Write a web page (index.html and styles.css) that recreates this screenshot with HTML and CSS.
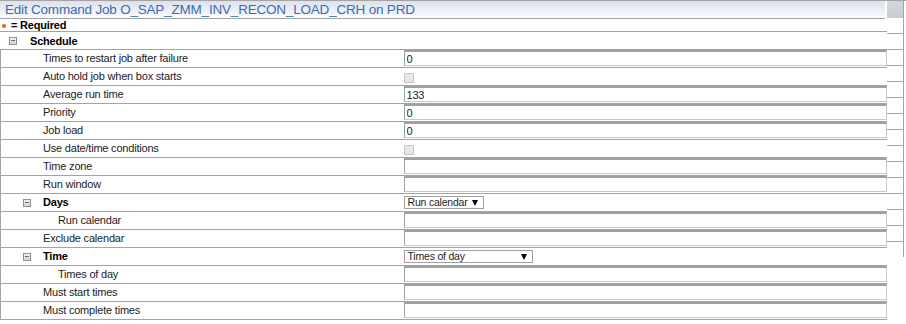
FILE: index.html
```html
<!DOCTYPE html>
<html lang="en">
  <head>
    <meta charset="UTF-8" />
    <title>Edit Command Job</title>
    <link rel="stylesheet" href="styles.css">
  </head>
  <body>
    <div class="page">
      <div class="main">
        <div class="title">Edit Command Job O_SAP_ZMM_INV_RECON_LOAD_CRH on PRD</div>
        <div class="required"><span class="dot"></span>= Required</div>
        <div class="section"><span class="toggle"></span>Schedule</div>

        <table class="form">
          <colgroup>
            <col class="col-label" />
            <col class="col-field" />
          </colgroup>
          <tr>
            <td class="label">Times to restart job after failure</td>
            <td class="field"><input class="text" type="text" value="0" /></td>
          </tr>
          <tr>
            <td class="label">Auto hold job when box starts</td>
            <td class="field"><span class="check"></span></td>
          </tr>
          <tr>
            <td class="label">Average run time</td>
            <td class="field"><input class="text" type="text" value="133" /></td>
          </tr>
          <tr>
            <td class="label">Priority</td>
            <td class="field"><input class="text" type="text" value="0" /></td>
          </tr>
          <tr>
            <td class="label">Job load</td>
            <td class="field"><input class="text" type="text" value="0" /></td>
          </tr>
          <tr>
            <td class="label">Use date/time conditions</td>
            <td class="field"><span class="check"></span></td>
          </tr>
          <tr>
            <td class="label">Time zone</td>
            <td class="field"><input class="text" type="text" value="" /></td>
          </tr>
          <tr>
            <td class="label">Run window</td>
            <td class="field"><input class="text" type="text" value="" /></td>
          </tr>
          <tr>
            <td class="label group"><span class="toggle"></span>Days</td>
            <td class="field"><span class="select short">Run calendar</span></td>
          </tr>
          <tr>
            <td class="label sub">Run calendar</td>
            <td class="field"><input class="text" type="text" value="" /></td>
          </tr>
          <tr>
            <td class="label">Exclude calendar</td>
            <td class="field"><input class="text" type="text" value="" /></td>
          </tr>
          <tr>
            <td class="label group"><span class="toggle"></span>Time</td>
            <td class="field"><span class="select wide">Times of day</span></td>
          </tr>
          <tr>
            <td class="label sub">Times of day</td>
            <td class="field"><input class="text" type="text" value="" /></td>
          </tr>
          <tr>
            <td class="label">Must start times</td>
            <td class="field"><input class="text" type="text" value="" /></td>
          </tr>
          <tr>
            <td class="label">Must complete times</td>
            <td class="field"><input class="text" type="text" value="" /></td>
          </tr>
        </table>
      </div>

      <div class="side">
        <div class="side-head"></div>
        <div class="side-rows"></div>
      </div>
    </div>
  </body>
</html>
```

FILE: styles.css
```css
body {
  margin: 0;
  font-family: "Liberation Sans", Arial, sans-serif;
  font-size: 11px;
  letter-spacing: -0.2px;
  color: #1c1c1c;
  background: #fff;
}

.page {
  display: flex;
  width: 906px;
  height: 324px;
  overflow: hidden;
  border-top: 1px solid #a4a4a4;
  box-sizing: border-box;
}

.main {
  width: 887px;
  flex: none;
}

.title {
  height: 18px;
  width: 885px;
  line-height: 18px;
  padding-left: 5px;
  box-sizing: border-box;
  font-size: 13.5px;
  letter-spacing: -0.2px;
  color: #3a6db0;
  background: linear-gradient(to bottom, #dce1ee, #f4f6fa 80%, #ffffff);
  border-bottom: 1px solid #a4a4a4;
  white-space: nowrap;
}

.required {
  height: 11px;
  padding-top: 1px;
  line-height: 11px;
  font-weight: bold;
  color: #000;
  display: flex;
  align-items: center;
  border-bottom: 1px solid #a4a4a4;
}

.dot {
  width: 4px;
  height: 4px;
  border-radius: 50%;
  background: #f06010;
  margin: 0 5px 0 2px;
}

.section {
  height: 17px;
  display: flex;
  align-items: center;
  padding-left: 9px;
  font-weight: bold;
  color: #000;
  border-bottom: 1px solid #a4a4a4;
}

.toggle {
  width: 6px;
  height: 6px;
  border: 1px solid #8a978a;
  background: linear-gradient(to bottom, #f0f0f0, #d2d6d2);
  position: relative;
  margin-right: 13px;
  flex: none;
}

.toggle::after {
  content: "";
  position: absolute;
  left: 1px;
  right: 1px;
  top: 2px;
  height: 1px;
  background: #6a6a6a;
}

.form {
  border-collapse: collapse;
  table-layout: fixed;
  width: 887px;
  border-left: 1px solid #a4a4a4;
}

.col-label {
  width: 403px;
}

.form td {
  height: 17px;
  padding: 0;
  border-bottom: 1px solid #a4a4a4;
  vertical-align: top;
}

.label {
  padding-left: 42px !important;
  line-height: 17px;
  white-space: nowrap;
}

.label.sub {
  padding-left: 57px !important;
}

.label.group {
  padding-left: 22px !important;
  font-weight: bold;
  color: #000;
}

.label.group .toggle {
  display: inline-block;
  vertical-align: -1px;
  margin-right: 12px;
}

.text {
  display: block;
  width: 100%;
  height: 16px;
  margin: 0;
  padding: 0 2px;
  box-sizing: border-box;
  font-family: inherit;
  font-size: 11px;
  letter-spacing: -0.2px;
  color: #1c1c1c;
  border: 1px solid #c8c8c8;
  border-top: 2px solid #a0a0a0;
  border-left: 1px solid #a0a0a0;
  outline: none;
}

.check {
  display: block;
  width: 8px;
  height: 8px;
  margin-top: 5px;
  border: 1px solid #c4c4c4;
  border-radius: 1px;
  background: #e8e8e8;
}

.select {
  display: block;
  position: relative;
  box-sizing: border-box;
  height: 13px;
  margin-top: 2px;
  line-height: 11px;
  padding-left: 3px;
  font-size: 10.5px;
  border: 1px solid #a0a0a0;
  color: #1c1c1c;
  white-space: nowrap;
}

.select::after {
  content: "";
  position: absolute;
  right: 5px;
  top: 3px;
  border-left: 3.5px solid transparent;
  border-right: 3.5px solid transparent;
  border-top: 6px solid #000;
}

.select.short {
  width: 80px;
}

.select.wide {
  width: 129px;
}

.side {
  width: 16px;
  flex: none;
  border-right: 1px solid #a4a4a4;
  height: 256px;
}

.side-head {
  height: 17px;
  background: linear-gradient(to bottom, #d4d8de, #c6cad2);
}

.side-rows {
  height: 239px;
  background: repeating-linear-gradient(to bottom, transparent 0, transparent 15px, #a4a4a4 15px, #a4a4a4 16px);
}
```
